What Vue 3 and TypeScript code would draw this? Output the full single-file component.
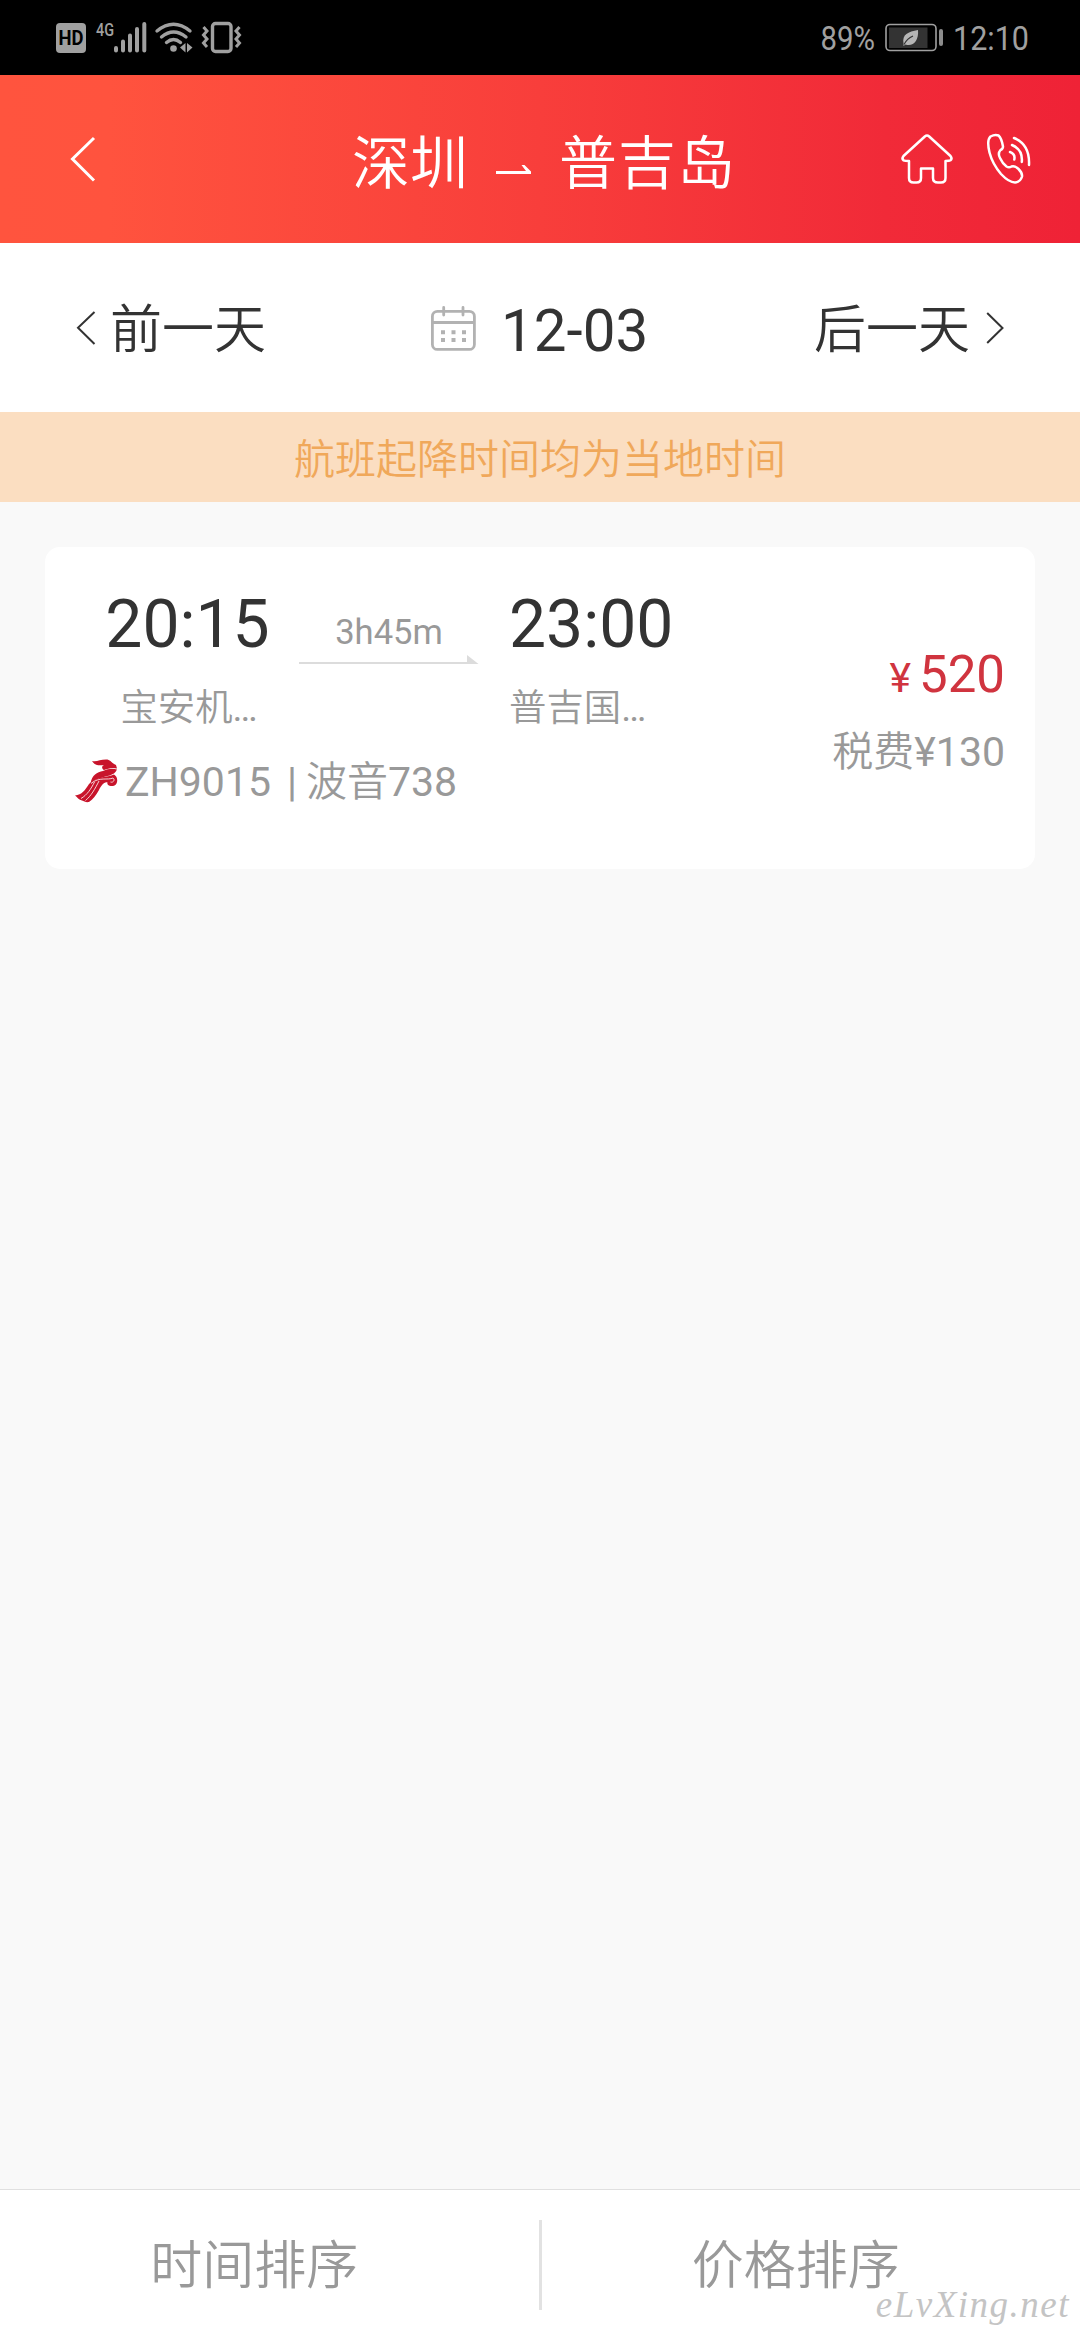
<script setup lang="ts">
interface Flight {
  depart: string
  arrive: string
  from: string
  to: string
  duration: string
  code: string
  plane: string
  model: string
  price: number
  tax: number
}

const flights: Flight[] = [
  {
    depart: '20:15',
    arrive: '23:00',
    from: '宝安机',
    to: '普吉国',
    duration: '3h45m',
    code: 'ZH9015',
    plane: '波音',
    model: '738',
    price: 520,
    tax: 130,
  },
]
const sorts: string[] = ['时间排序', '价格排序']
</script>

<template>
  <div class="screen">
    <div class="status">
      <svg class="status-left" width="190" height="75" viewBox="54 0 190 75" fill="none">
        <rect x="56" y="23" width="30" height="30" rx="4" fill="#a0a0a0" />
        <text x="71" y="45" text-anchor="middle" font-size="20" font-weight="700" fill="#000" textLength="25" lengthAdjust="spacingAndGlyphs">HD</text>
        <text x="96" y="36" font-size="19" font-weight="500" fill="#a0a0a0" textLength="18" lengthAdjust="spacingAndGlyphs">4G</text>
        <g stroke="#a0a0a0" stroke-width="4" stroke-linecap="round">
          <path d="M116 48v2.5M123 41.500v9M130 35.500v15M137 29v21.500M144.300 24v26.500" />
        </g>
        <g stroke="#a0a0a0" stroke-width="3.400" stroke-linecap="round">
          <path d="M157 31Q173.500 17.500 190 31M161.500 37Q173.500 27 186 37M166.500 42.500Q173.500 36.500 180.500 42.500" />
        </g>
        <circle cx="173.500" cy="48.500" r="3.300" fill="#a0a0a0" />
        <path d="M185.500 43v9.500l-5.500-5zM187 43v9.500l5.500-5z" fill="#a0a0a0" />
        <rect x="212.500" y="23.500" width="18.500" height="28" rx="3" stroke="#a0a0a0" stroke-width="3.400" />
        <path d="M203.500 27l3.500 4-3.500 4 3.500 4-3.500 4 3.500 4M239.500 27l-3.500 4 3.500 4-3.500 4 3.500 4-3.500 4" stroke="#a0a0a0" stroke-width="3" />
      </svg>
      <svg class="status-right" width="264" height="75" viewBox="816 0 264 75" fill="none">
        <text x="820.500" y="50" font-size="34" fill="#a0a0a0" textLength="54.500" lengthAdjust="spacingAndGlyphs">89%</text>
        <rect x="886" y="24.500" width="50" height="26" rx="4" stroke="#a0a0a0" stroke-width="1.600" />
        <rect x="889" y="27.500" width="38.500" height="20.500" fill="#333" />
        <path d="M903.500 43.500C902 34 908 32 918 30C919 41 913 47 905.500 44.500L903.500 46Z" fill="#b5b5b5" />
        <path d="M904 44.500Q907 38.500 913 36" stroke="#333" stroke-width="1.200" />
        <rect x="939" y="29" width="4" height="17" rx="2" fill="#8c8c8c" />
        <text x="953" y="50" font-size="34" fill="#a0a0a0" textLength="76" lengthAdjust="spacingAndGlyphs">12:10</text>
      </svg>
    </div>

    <header class="header">
      <svg class="back" width="30" height="50" viewBox="68 134 30 50" fill="none" stroke="#fff" stroke-width="3">
        <path d="M94 138L72.500 159L94 180.500" />
      </svg>
      <div class="route">
        <span>深圳</span>
        <svg width="38" height="14" viewBox="495 162 38 14">
          <path d="M496 171H526L521.500 165H524.500L531 171.500V174H496Z" fill="#fff" />
        </svg>
        <span class="dest">普吉岛</span>
      </div>
      <svg class="home" width="56" height="54" viewBox="899 132 56 54" fill="none" stroke="#fff" stroke-width="2.500" stroke-linejoin="round">
        <path d="M924.800 136.500Q927 134.600 929.200 136.500L950.500 156Q952.500 158.500 950.500 160.300Q949.500 161 945.500 161V178Q945.500 182.500 941 182.500H938Q933 182.500 933 178V168.500H921V178Q921 182.500 916.500 182.500H913.500Q909 182.500 909 178V161Q905 161 903.500 160.300Q901.500 158.500 903.500 156Z" />
      </svg>
      <svg class="phone" width="50" height="54" viewBox="984 132 50 54" fill="none" stroke="#fff" stroke-width="2.500" stroke-linecap="round" stroke-linejoin="round">
        <path d="M990.500 136.500Q995 134 998.500 135.500Q1001.500 138 1003 146.500Q1003 149 1000.500 150Q997.500 153.500 1000 158Q1002.500 163.500 1006.500 166.500Q1009 168 1011.500 166.500Q1015 165.500 1018.500 169Q1022.500 173 1022 176.500Q1020.500 182 1015 182.500Q1009 182.500 1001 174Q992.500 164 989.500 152.500Q986.500 140 990.500 136.500Z" />
        <path d="M1014 138Q1030 144.500 1029 165M1012 145Q1023 149.500 1021.800 162M1010 152Q1015.500 154 1014.300 159.500" />
      </svg>
    </header>

    <nav class="days">
      <div class="day prev">
        <svg width="20" height="36" viewBox="76 309 20 36" fill="none" stroke="#333" stroke-width="2"><path d="M94.500 311L78 326.800L94.500 343" /></svg>
        <span>前一天</span>
      </div>
      <div class="date">
        <svg width="46" height="48" viewBox="430 303 46 48" fill="none" stroke="#b2b2b2" stroke-width="2.800">
          <rect x="432.400" y="310.400" width="42" height="38" rx="5" />
          <path d="M432.400 321.500H474.500" />
          <path d="M443.700 306.500V314M463 306.500V314" stroke-linecap="round" />
          <path d="M441 331.300h4M451.500 331.300h4M462 331.300h4M441 339h4M451.500 339h4M462 339h4" stroke-width="4" />
        </svg>
        <span>12-03</span>
      </div>
      <div class="day next">
        <span>后一天</span>
        <svg width="20" height="36" viewBox="985 309 20 36" fill="none" stroke="#333" stroke-width="2"><path d="M987.200 312L1002.500 327L987.200 342" /></svg>
      </div>
    </nav>

    <div class="notice">航班起降时间均为当地时间</div>

    <main class="list">
      <article v-for="f in flights" :key="f.code" class="card">
        <div class="info">
          <div class="trip">
            <div class="place from">
              <div class="time">{{ f.depart }}</div>
              <div class="airport"><span class="zh">{{ f.from }}</span>…</div>
            </div>
            <div class="duration">
              <div>{{ f.duration }}</div>
              <svg width="180" height="10" viewBox="0 0 180 10" fill="#dcdcdc"><path d="M0 7H168V0L179.500 9H0Z" /></svg>
            </div>
            <div class="place to">
              <div class="time">{{ f.arrive }}</div>
              <div class="airport"><span class="zh">{{ f.to }}</span>…</div>
            </div>
          </div>
          <div class="flight">
            <svg width="44" height="44" viewBox="0 0 44 44">
              <g fill="#c8142b">
                <path d="M17 2C22 3 25 0.500 31 0.500C36 0.500 36 4 41 6L42 9.500C37 8 33 9.500 29 11C26 9 27 7 29 6C25 6.500 20 7 17 2Z" />
                <path d="M42 10.500C39 17.500 31 16.500 26 19C22 20 19 21 15.500 24.500C17 16 22 13 28 12C33 10 37 9 42 10.500Z" />
                <path d="M14 25C21 17.500 32 18.500 39 15.500C43.500 18 43 25 39.500 26.500C36 28 31.500 26.500 32.500 23.500C29 22.500 26 27 24 31C21 36 18 40.500 14 43C11 43.500 9 42.500 7 41.500C4 41 2 38 0 36.500C7 36 10 31 14 25Z" />
              </g>
              <g fill="none" stroke="#fbe4e6" stroke-width="0.900">
                <path d="M19.500 23C16 30 12 36 6 39.500M24 22C20 30 16 37 10.500 41.500M16 24.500C24 17.500 33 21.500 38 19C40.500 21 38 24 35.500 23" />
              </g>
            </svg>
            <span>{{ f.code }}</span><span class="bar">|</span><span class="zh">{{ f.plane }}</span><span>{{ f.model }}</span>
          </div>
        </div>
        <div class="fare">
          <div class="price"><span class="yen">¥</span>{{ f.price }}</div>
          <div class="tax"><span class="zh">税费</span>¥{{ f.tax }}</div>
        </div>
      </article>
    </main>

    <footer class="sorts">
      <div v-for="s in sorts" :key="s" class="sort">{{ s }}</div>
      <div class="watermark">eLvXing.net</div>
    </footer>
  </div>
</template>

<style>
body {
  margin: 0;
  background: #f9f9f9;
}
</style>

<style scoped>
.screen {
  width: 1080px;
  height: 2340px;
  display: flex;
  flex-direction: column;
  background: #f9f9f9;
  font-family: Roboto, "Noto Sans CJK SC", sans-serif;
  color: #333;
  overflow: hidden;
  white-space: nowrap;
}
svg {
  display: block;
  flex: none;
}
.zh {
  font-weight: 350;
}
.status {
  height: 75px;
  background: #000;
  display: flex;
  justify-content: space-between;
  padding-left: 54px;
}
.header {
  height: 168px;
  display: flex;
  align-items: center;
  background: linear-gradient(90deg, #ff543e 0%, #ff533e 10%, #f83e3b 50%, #f12a38 82%, #ef2236 100%);
  color: #fff;
}
.back {
  margin-left: 68px;
}
.route {
  display: flex;
  align-items: center;
  margin-left: 254px;
  width: 384px;
  justify-content: space-between;
  font-size: 58px;
  line-height: 70px;
  padding-top: 10px;
  font-weight: 350;
}
.route svg {
  margin: 10px 0 0 1px;
}
.dest {
  letter-spacing: 1px;
}
.home {
  margin-left: 163px;
}
.phone {
  margin-left: 29px;
}
.days {
  height: 169px;
  background: #fff;
  display: grid;
  grid-template-columns: 1fr 1fr 1fr;
  align-items: center;
}
.day,
.date {
  display: flex;
  align-items: center;
  line-height: 70px;
}
.day {
  font-size: 52px;
  font-weight: 350;
}
.day span,
.date span {
  padding-top: 6px;
}
.prev {
  padding-left: 76px;
  gap: 14px;
}
.date {
  padding-left: 70px;
  gap: 25px;
  font-size: 58.300px;
}
.next {
  justify-content: flex-end;
  padding-right: 75px;
  gap: 15px;
}
.notice {
  height: 83px;
  padding-top: 7px;
  background: #fbdec1;
  color: #f0a85a;
  font-size: 41px;
  font-weight: 350;
  line-height: 83px;
  text-align: center;
}
.list {
  flex: 1;
  padding: 45px;
}
.card {
  height: 322px;
  box-sizing: border-box;
  border-radius: 15px;
  background: #fff;
  display: flex;
  justify-content: space-between;
  padding: 45px 30px 0;
}
.trip {
  display: flex;
}
.from {
  width: 224px;
  text-align: center;
}
.from .time {
  margin-left: 1px;
}
.from .airport {
  margin-left: 4px;
}
.time {
  font-size: 66px;
  line-height: 66px;
}
.airport {
  margin-top: 26px;
  font-size: 37.400px;
  line-height: 48px;
  color: #999;
}
.duration {
  width: 180px;
  padding-top: 20px;
  font-size: 34.600px;
  line-height: 40px;
  color: #999;
  text-align: center;
}
.duration svg {
  margin-top: 3px;
}
.to {
  margin-left: 30px;
}
.flight {
  display: flex;
  align-items: center;
  height: 50px;
  margin-top: 25px;
  font-size: 41px;
  line-height: 50px;
  color: #999;
}
.flight svg {
  margin: -3px 6px 0 0;
}
.bar {
  margin: 0 9px 0 16px;
}
.fare {
  padding-top: 55px;
  text-align: right;
  color: #999;
}
.price {
  color: #d0343f;
  font-size: 51px;
  line-height: 56px;
}
.yen {
  font-size: 41px;
  margin-right: 8px;
}
.tax {
  margin-top: 18px;
  font-size: 41px;
  line-height: 56px;
}
.sorts {
  position: relative;
  height: 150px;
  border-top: 1px solid #e0e0e0;
  background: #fff;
  display: flex;
  align-items: center;
}
.sort {
  flex: 1;
  box-sizing: border-box;
  height: 90px;
  padding: 5px 30px 0 0;
  font-size: 52px;
  font-weight: 350;
  line-height: 84px;
  text-align: center;
  color: #999;
}
.sort:first-child {
  border-right: 3px solid #e2e2e2;
}
.watermark {
  position: absolute;
  right: 10px;
  bottom: 13px;
  font: italic 37px/44px "Liberation Serif", serif;
  letter-spacing: 1.500px;
  color: #c4c4c4;
}
</style>
